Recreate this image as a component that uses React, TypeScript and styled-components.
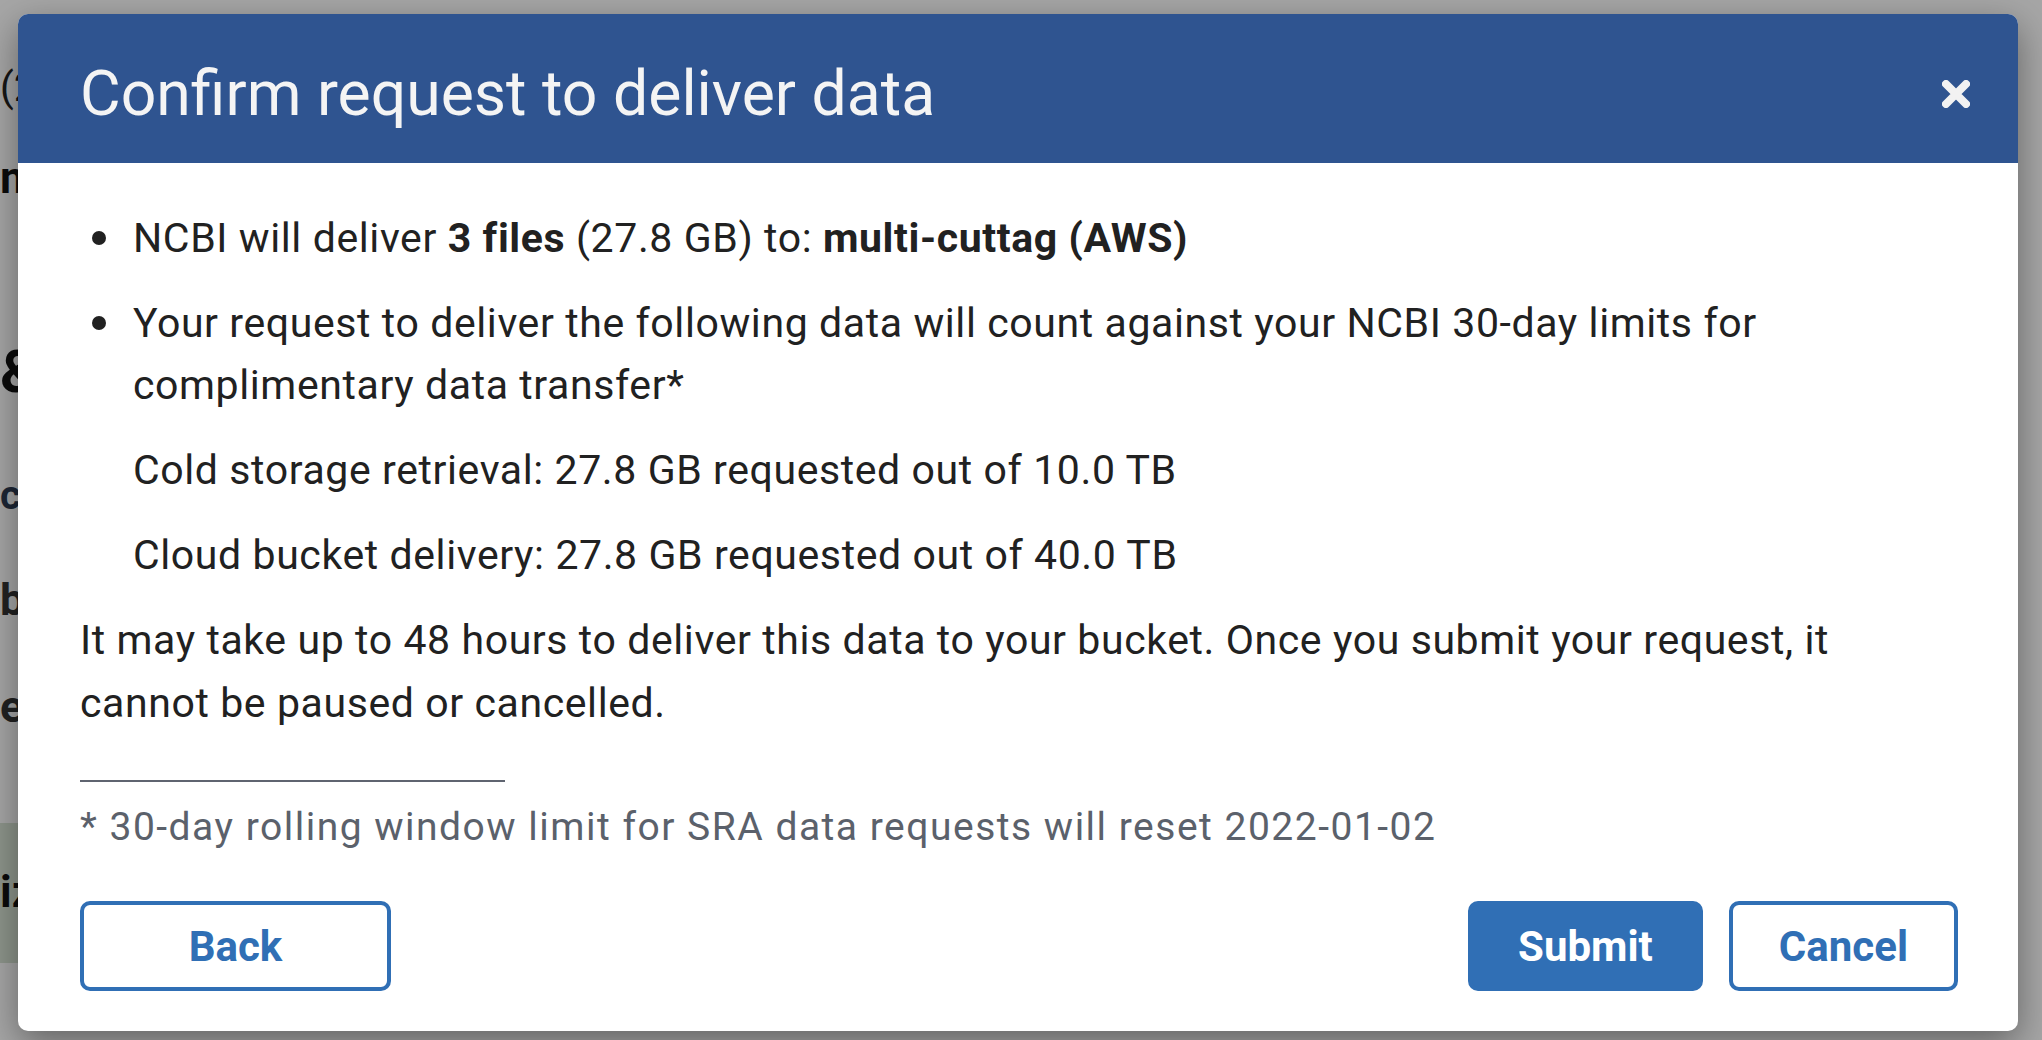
import styled, { createGlobalStyle } from 'styled-components'

const GlobalStyle = createGlobalStyle`
  html, body {
    margin: 0;
    padding: 0;
  }
  body {
    font-family: Roboto, "Noto Sans", "Liberation Sans", Arial, sans-serif;
    background: #fff;
    overflow: hidden;
  }
  * {
    box-sizing: border-box;
  }
`

const Page = styled.div`
  position: relative;
  width: 2042px;
  height: 1040px;
  overflow: hidden;
  background: #fff;
`

// the page behind the dialog: only a thin strip of it peeks out on the left
const PageColumn = styled.div`
  width: 18px;
  overflow: hidden;
  display: flex;
  flex-direction: column;
`

const PageRow = styled.div<{ $size: number; $gap: number; $bold?: boolean; $color?: string }>`
  margin-top: ${(p) => p.$gap}px;
  font-size: ${(p) => p.$size}px;
  line-height: 1;
  font-weight: ${(p) => (p.$bold ? 700 : 400)};
  color: ${(p) => p.$color || '#111'};
  white-space: nowrap;
`

const PageBand = styled.div`
  margin-top: 94px;
  height: 140px;
  padding-top: 47px;
  background: #d9e5d6;
  font-size: 44px;
  line-height: 1;
  font-weight: 700;
  color: #111;
  white-space: nowrap;
`

const Overlay = styled.div`
  position: absolute;
  inset: 0;
  display: flex;
  padding: 14px 24px 9px 18px;
  background: rgba(0, 0, 0, 0.35);
`

const Modal = styled.div`
  flex: 1;
  display: flex;
  flex-direction: column;
  background: #fff;
  border-radius: 10px;
  overflow: hidden;
  box-shadow: 0 12px 36px rgba(0, 0, 0, 0.4);
`

const Header = styled.div`
  height: 149px;
  flex-shrink: 0;
  display: flex;
  align-items: center;
  justify-content: space-between;
  padding: 10px 48px 0 62px;
  background: #2f5490;
`

const Title = styled.h2`
  margin: 0;
  font-size: 62.5px;
  font-weight: 400;
  color: #f4f4f4;
`

const CloseButton = styled.button`
  width: 28px;
  height: 28px;
  padding: 0;
  border: 0;
  background: none;
  color: #f2f2f2;
  cursor: pointer;
  svg {
    display: block;
  }
`

const Body = styled.div`
  flex: 1;
  display: flex;
  flex-direction: column;
  padding: 44px 60px 40px 62px;
  color: #212121;
  font-size: 41px;
  letter-spacing: 0.6px;
`

const List = styled.ul`
  margin: 0;
  padding: 0 0 0 53px;
  list-style: none;
`

const Item = styled.li`
  position: relative;
  line-height: 62px;
  margin-bottom: 23px;

  &::before {
    content: '';
    position: absolute;
    left: -41px;
    top: 24px;
    width: 14px;
    height: 14px;
    border-radius: 50%;
    background: #212121;
  }
`

const SubLine = styled.p`
  margin: 23px 0 0;
`

const Text = styled.p`
  margin: 0;
  line-height: 63px;
`

const Rule = styled.div`
  width: 425px;
  height: 2px;
  margin-top: 45px;
  background: #5f6470;
`

const Footnote = styled.p`
  margin: 18px 0 0;
  font-size: 39px;
  letter-spacing: 1.5px;
  line-height: 54px;
  color: #5b616b;
`

const Actions = styled.div`
  margin-top: auto;
  display: flex;
  gap: 26px;
`

const Button = styled.button<{ $primary?: boolean; $width?: number }>`
  height: 90px;
  ${(p) => (p.$width ? `width: ${p.$width}px;` : 'padding: 0 46px;')}
  border: 4px solid #306fb5;
  border-radius: 10px;
  background: ${(p) => (p.$primary ? '#306fb5' : '#fff')};
  color: ${(p) => (p.$primary ? '#fff' : '#306fb5')};
  font-family: Roboto, "Noto Sans", "Liberation Sans", Arial, sans-serif;
  font-size: 42px;
  font-weight: 700;
  cursor: pointer;

  &:first-child {
    margin-right: auto;
  }
`

const backgroundRows = [
  { text: '(2', size: 40, gap: 68, color: '#222' },
  { text: 'm', size: 44, gap: 48, bold: true },
  { text: '&', size: 60, gap: 142, bold: true },
  { text: 'c', size: 40, gap: 74, bold: true, color: '#2d3b52' },
  { text: 'b', size: 44, gap: 62, bold: true, color: '#333' },
  { text: 'es', size: 44, gap: 63, bold: true, color: '#333' },
]

const CloseIcon = () => (
  <svg width="28" height="28" viewBox="0 0 28 28">
    <path d="M4 4 L24 24 M24 4 L4 24" stroke="currentColor" strokeWidth="8" strokeLinecap="round" />
  </svg>
)

export default function App() {
  return (
    <Page>
      <GlobalStyle />
      <PageColumn>
        {backgroundRows.map((r) => (
          <PageRow key={r.text} $size={r.size} $gap={r.gap} $bold={r.bold} $color={r.color}>
            {r.text}
          </PageRow>
        ))}
        <PageBand>iz</PageBand>
      </PageColumn>

      <Overlay>
        <Modal>
          <Header>
            <Title>Confirm request to deliver data</Title>
            <CloseButton aria-label="Close">
              <CloseIcon />
            </CloseButton>
          </Header>
          <Body>
            <List>
              <Item>
                NCBI will deliver <b>3 files</b> (27.8 GB) to: <b>multi-cuttag (AWS)</b>
              </Item>
              <Item>
                Your request to deliver the following data will count against your NCBI 30-day limits for
                complimentary data transfer*
                <SubLine>Cold storage retrieval: 27.8 GB requested out of 10.0 TB</SubLine>
                <SubLine>Cloud bucket delivery: 27.8 GB requested out of 40.0 TB</SubLine>
              </Item>
            </List>
            <Text>
              It may take up to 48 hours to deliver this data to your bucket. Once you submit your request, it
              cannot be paused or cancelled.
            </Text>
            <Rule />
            <Footnote>* 30-day rolling window limit for SRA data requests will reset 2022-01-02</Footnote>
            <Actions>
              <Button $width={311}>Back</Button>
              <Button $primary>Submit</Button>
              <Button>Cancel</Button>
            </Actions>
          </Body>
        </Modal>
      </Overlay>
    </Page>
  )
}
